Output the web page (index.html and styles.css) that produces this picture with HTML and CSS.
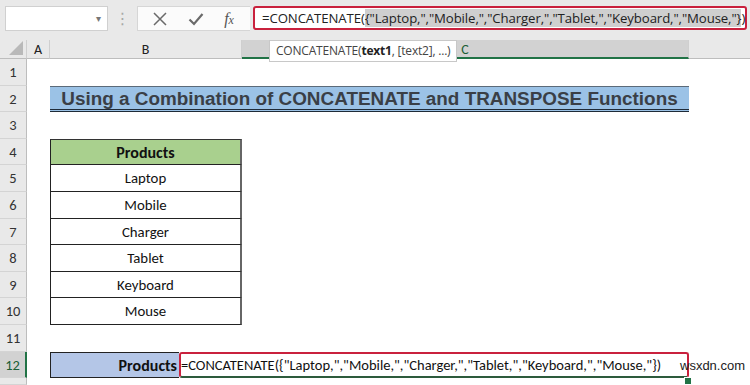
FILE: index.html
```html
<!DOCTYPE html>
<html>
<head>
    <title>CONCATENATE and TRANSPOSE</title>
    <meta name="viewport" content="width=device-width, initial-scale=1.0">
    <link rel="stylesheet" href="styles.css">
</head>
<body>
    <div class="toolbar">
        <div class="namebox">
            <span class="caret">&#9662;</span>
        </div>
        <div class="grip">&#8942;</div>
        <div class="fxbox">
            <svg class="icon" width="16" height="16" viewBox="0 0 16 16"><path d="M2 2 L14 14 M14 2 L2 14" stroke="#6a6a6a" stroke-width="1.5" fill="none"/></svg>
            <svg class="icon" width="16" height="16" viewBox="0 0 16 16"><path d="M1.5 8.5 L6 13 L14.5 3" stroke="#6a6a6a" stroke-width="2.2" fill="none"/></svg>
            <span class="fx">f<i>x</i></span>
        </div>
        <div class="formula">=CONCATENATE(<span class="hl">{"Laptop,","Mobile,","Charger,","Tablet,","Keyboard,","Mouse,"}</span>)</div>
    </div>

    <div class="sheet">
        <div class="corner"><span class="tri"></span></div>
        <div class="colhead">A</div>
        <div class="colhead">B</div>
        <div class="colhead selected">C</div>
        <div class="colhead blank"></div>

        <!-- row 1 -->
        <div class="rowhead">1</div><div class="cell wide"></div>
        <!-- row 2 -->
        <div class="rowhead">2</div><div class="cell"></div>
        <div class="title">Using a Combination of CONCATENATE and TRANSPOSE Functions</div>
        <div class="cell"></div>
        <!-- row 3 -->
        <div class="rowhead">3</div><div class="cell wide"></div>
        <!-- rows 4-10 -->
        <div class="rowhead">4</div><div class="cell"></div><div class="item head">Products</div><div class="cell rest"></div>
        <div class="rowhead">5</div><div class="cell"></div><div class="item">Laptop</div><div class="cell rest"></div>
        <div class="rowhead">6</div><div class="cell"></div><div class="item">Mobile</div><div class="cell rest"></div>
        <div class="rowhead">7</div><div class="cell"></div><div class="item">Charger</div><div class="cell rest"></div>
        <div class="rowhead">8</div><div class="cell"></div><div class="item">Tablet</div><div class="cell rest"></div>
        <div class="rowhead">9</div><div class="cell"></div><div class="item">Keyboard</div><div class="cell rest"></div>
        <div class="rowhead">10</div><div class="cell"></div><div class="item last">Mouse</div><div class="cell rest"></div>
        <!-- row 11 -->
        <div class="rowhead">11</div><div class="cell wide"></div>
        <!-- row 12 -->
        <div class="rowhead selected">12</div><div class="cell"></div>
        <div class="editrow">
            <div class="label">Products</div>
            <div class="editor">=CONCATENATE({"Laptop,","Mobile,","Charger,","Tablet,","Keyboard,","Mouse,"})</div>
        </div>
        <div class="cell"></div>
        <!-- row 13, only its top edge shows -->
        <div class="rowhead"></div><div class="cell wide"></div>

        <div class="tip">CONCATENATE(<b>text1</b>, [text2], ...)</div>
        <div class="handle"></div>
        <div class="mark">wsxdn.com</div>
    </div>
</body>
</html>
```

FILE: styles.css
```css
body {
    margin: 0;
    width: 750px;
    height: 385px;
    overflow: hidden;
    background-color: #ffffff;
    font-family: "Carlito", Lato, sans-serif;
}

/* formula bar */
.toolbar {
    height: 40px;
    background-color: #e9e9e9;
    display: flex;
    align-items: flex-start;
    padding-top: 6px;
    box-sizing: border-box;
}

.namebox {
    margin-left: 5px;
    width: 103px;
    height: 25px;
    box-sizing: border-box;
    background-color: #ffffff;
    border: 1px solid #d0d0d0;
    display: flex;
    justify-content: flex-end;
    align-items: center;
    padding-right: 6px;
}

.caret {
    color: #777;
    font-size: 10px;
    font-family: "DejaVu Sans", sans-serif;
}

.grip {
    width: 29px;
    text-align: center;
    color: #a8a8a8;
    font-size: 16px;
    line-height: 25px;
    font-family: "DejaVu Sans", sans-serif;
}

.fxbox {
    width: 113px;
    height: 25px;
    box-sizing: border-box;
    background-color: #fbfbfb;
    border: 1px solid #d6d6d6;
    border-right: none;
    display: flex;
    align-items: center;
    justify-content: space-around;
    padding: 0 6px 0 4px;
}

.fx {
    font-family: "Liberation Serif", serif;
    font-style: italic;
    color: #555;
    font-size: 16px;
}

.fx i {
    font-size: 12px;
}

.formula {
    margin-left: 3px;
    width: 494px;
    height: 24px;
    box-sizing: border-box;
    border: 2px solid #c9213d;
    border-radius: 3px;
    background-color: #ffffff;
    font-family: "Open Sans", sans-serif;
    font-size: 13.2px;
    letter-spacing: -0.1px;
    line-height: 20px;
    padding-left: 7px;
    white-space: nowrap;
    color: #222;
}

.hl {
    background-color: #cfcfcf;
}

/* grid */
.sheet {
    position: relative;
    display: grid;
    grid-template-columns: 27px 23px 192px 447px 61px;
    grid-template-rows: 19px repeat(12, 26.6px) 6.8px;
    overflow: hidden;
}

.corner {
    background-color: #e9e9e9;
    border-right: 1px solid #cfcfcf;
    border-bottom: 1px solid #bdbdbd;
    position: relative;
}

.tri {
    position: absolute;
    right: 3px;
    bottom: 3px;
    width: 0;
    height: 0;
    border-left: 14px solid transparent;
    border-bottom: 14px solid #b9b9b9;
}

.colhead {
    background-color: #e9e9e9;
    border-right: 1px solid #cfcfcf;
    border-bottom: 1px solid #bdbdbd;
    text-align: center;
    font-size: 14px;
    line-height: 19px;
    color: #222;
}

.colhead.selected {
    background-color: #d2d2d2;
    border-bottom: 2px solid #217346;
    color: #1b5e35;
}

.colhead.blank {
    border-right: none;
}

.rowhead {
    grid-column: 1;
    background-color: #e9e9e9;
    border-right: 1px solid #bdbdbd;
    border-bottom: 1px solid #d4d4d4;
    text-align: center;
    font-size: 14.5px;
    line-height: 27px;
    color: #333;
}

.rowhead.selected {
    background-color: #d2d2d2;
    border-right: 2px solid #217346;
    color: #1b5e35;
}

.cell.wide {
    grid-column: 2 / 6;
}

.cell.rest {
    grid-column: 4 / 6;
}

.title {
    grid-column: 3 / 5;
    background-color: #9bc2e6;
    border-top: 1px solid #5b6a79;
    border-bottom: 3px double #1f2b38;
    font-family: "Liberation Sans", Arial, sans-serif;
    font-weight: bold;
    font-size: 18.9px;
    color: #3a3f46;
    text-align: center;
    line-height: 23px;
    white-space: nowrap;
}

.item {
    grid-column: 3;
    border: 1px solid #222;
    border-top: none;
    border-right: 2px solid #666;
    text-align: center;
    font-size: 14.8px;
    line-height: 27px;
    color: #111;
}

.item.head {
    background-color: #a9d08e;
    border-top: 1px solid #333;
    border-bottom: 1px solid #222;
    font-weight: bold;
    font-size: 16px;
    line-height: 25px;
}

.editrow {
    grid-column: 3 / 5;
    display: flex;
}

.label {
    width: 129px;
    box-sizing: border-box;
    background-color: #b4c6e7;
    border: 1px solid #222;
    border-right: none;
    text-align: right;
    padding-right: 2px;
    font-weight: bold;
    font-size: 16px;
    line-height: 25px;
    color: #111;
}

.editor {
    flex: 1;
    box-sizing: border-box;
    border: 2px solid #c9213d;
    border-radius: 3px;
    border-bottom: 2px solid #2d5b3c;
    font-size: 14.5px;
    line-height: 23px;
    white-space: nowrap;
    color: #111;
}

/* overlays */
.tip {
    position: absolute;
    left: 269px;
    top: 0;
    width: 188px;
    height: 22px;
    box-sizing: border-box;
    background-color: #ffffff;
    border: 1px solid #c8c8c8;
    font-family: "Open Sans", sans-serif;
    font-size: 12px;
    letter-spacing: -0.2px;
    line-height: 20px;
    padding-left: 6px;
    color: #444;
    white-space: nowrap;
}

.tip b {
    color: #222;
}

.handle {
    position: absolute;
    left: 684px;
    top: 337px;
    width: 6px;
    height: 6px;
    background-color: #217346;
    border: 1px solid #ffffff;
}

.mark {
    position: absolute;
    left: 680px;
    top: 318px;
    font-family: "Liberation Sans", Arial, sans-serif;
    font-size: 13px;
    color: #222;
}
```
